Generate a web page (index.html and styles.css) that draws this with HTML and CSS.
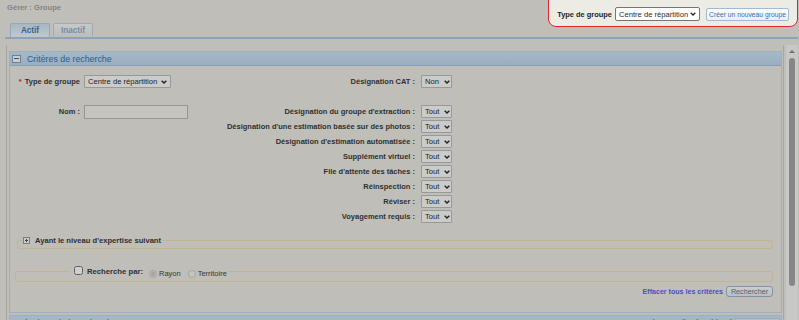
FILE: index.html
```html
<!DOCTYPE html>
<html lang="fr">

<head>
    <meta charset="UTF-8">
    <title>Gérer : Groupe</title>
    <link rel="stylesheet" href="styles.css">
</head>

<body>
    <div class="dim"></div>

    <header class="top">
        <div class="crumb">Gérer : Groupe</div>
        <div class="pick">
            <label>Type de groupe</label>
            <span class="sel sel-top">
                <select><option>Centre de répartition</option></select>
                <svg viewBox="0 0 6 4"><path d="M0.7 0.7 L3 3 L5.3 0.7"/></svg>
            </span>
            <button class="new-btn">Créer un nouveau groupe</button>
        </div>
    </header>

    <nav class="tabs">
        <a class="tab on">Actif</a>
        <a class="tab">Inactif</a>
    </nav>
    <div class="tabline"></div>

    <div class="content">
        <main class="main">
            <section class="panel">
                <h2 class="panel-head"><span class="tog minus"></span>Critères de recherche</h2>
                <div class="panel-body">
                    <div class="crit">
                        <label class="lbl"><span class="req">*</span>Type de groupe</label>
                        <span class="sel w-type">
                            <select><option>Centre de répartition</option></select>
                            <svg viewBox="0 0 6 4"><path d="M0.7 0.7 L3 3 L5.3 0.7"/></svg>
                        </span>
                        <label class="lbl r">Désignation CAT :</label>
                        <span class="sel w-small">
                            <select><option>Non</option></select>
                            <svg viewBox="0 0 6 4"><path d="M0.7 0.7 L3 3 L5.3 0.7"/></svg>
                        </span>

                        <div class="spacer"></div>

                        <label class="lbl">Nom :</label>
                        <input class="txt" type="text">
                        <label class="lbl r">Désignation du groupe d'extraction :</label>
                        <span class="sel w-small"><select><option>Tout</option></select><svg viewBox="0 0 6 4"><path d="M0.7 0.7 L3 3 L5.3 0.7"/></svg></span>

                        <label class="lbl r">Désignation d'une estimation basée sur des photos :</label>
                        <span class="sel w-small"><select><option>Tout</option></select><svg viewBox="0 0 6 4"><path d="M0.7 0.7 L3 3 L5.3 0.7"/></svg></span>

                        <label class="lbl r">Désignation d'estimation automatisée :</label>
                        <span class="sel w-small"><select><option>Tout</option></select><svg viewBox="0 0 6 4"><path d="M0.7 0.7 L3 3 L5.3 0.7"/></svg></span>

                        <label class="lbl r">Supplément virtuel :</label>
                        <span class="sel w-small"><select><option>Tout</option></select><svg viewBox="0 0 6 4"><path d="M0.7 0.7 L3 3 L5.3 0.7"/></svg></span>

                        <label class="lbl r">File d'attente des tâches :</label>
                        <span class="sel w-small"><select><option>Tout</option></select><svg viewBox="0 0 6 4"><path d="M0.7 0.7 L3 3 L5.3 0.7"/></svg></span>

                        <label class="lbl r">Réinspection :</label>
                        <span class="sel w-small"><select><option>Tout</option></select><svg viewBox="0 0 6 4"><path d="M0.7 0.7 L3 3 L5.3 0.7"/></svg></span>

                        <label class="lbl r">Réviser :</label>
                        <span class="sel w-small"><select><option>Tout</option></select><svg viewBox="0 0 6 4"><path d="M0.7 0.7 L3 3 L5.3 0.7"/></svg></span>

                        <label class="lbl r">Voyagement requis :</label>
                        <span class="sel w-small"><select><option>Tout</option></select><svg viewBox="0 0 6 4"><path d="M0.7 0.7 L3 3 L5.3 0.7"/></svg></span>
                    </div>

                    <fieldset class="grp expert">
                        <legend>
                            <span class="leg">
                                <svg class="plus" viewBox="0 0 7 7"><rect x="0.5" y="0.5" width="6" height="6" fill="#fafafa" stroke="#9a9a9a"/><path d="M2 3.5 H5 M3.5 2 V5" stroke="#555"/></svg>
                                Ayant le niveau d'expertise suivant
                            </span>
                        </legend>
                    </fieldset>

                    <fieldset class="grp zone">
                        <legend>
                            <span class="leg">
                                <input class="chk" type="checkbox">
                                <span class="leg-text">Recherche par:</span>
                                <span class="radios">
                                    <input type="radio" name="zone" checked disabled><span>Rayon</span>
                                    <input type="radio" name="zone" disabled><span>Territoire</span>
                                </span>
                            </span>
                        </legend>
                    </fieldset>

                    <div class="actions">
                        <a class="clear">Effacer tous les critères</a>
                        <button class="search">Rechercher</button>
                    </div>
                </div>
            </section>

            <section class="panel results">
                <h2 class="panel-head">
                    <span>Résultats de la recherche</span>
                    <span class="count">Groupes de travail 0 à 0 (de 0)<span class="pager"></span></span>
                </h2>
            </section>
        </main>
        <div class="scroll"><span class="arrow"></span><span class="thumb"></span></div>
    </div>
</body></html>
```
FILE: styles.css
```css
* {
    box-sizing: border-box;
    padding: 0;
    margin: 0;
}

body {
    width: 799px;
    height: 320px;
    overflow: hidden;
    padding: 0 1px 0 5px;
    background: #ecebe4;
    font-family: "Liberation Sans", Arial, sans-serif;
    color: #3b3b3b;
}

/* modal dimming, the group picker sits above it */
.dim {
    position: fixed;
    inset: 0;
    background: rgba(0, 0, 0, 0.19);
    z-index: 5;
    pointer-events: none;
}

.top {
    display: flex;
    justify-content: space-between;
    align-items: flex-start;
    height: 23px;
}

.crumb {
    padding: 3px 0 0 2px;
    font-size: 7.6px;
    line-height: 9px;
    font-weight: bold;
    color: #a3a3a3;
}

.pick {
    position: relative;
    z-index: 6;
    display: flex;
    align-items: center;
    margin-top: -10px;
    padding: 16px 8px 5px 8px;
    background: #ecebe4;
    border: 1.5px solid #e3222b;
    border-radius: 8px;
}

.pick label {
    font-size: 7.45px;
    font-weight: bold;
    color: #1e1e1e;
    margin-right: 3px;
}

.sel {
    display: inline-flex;
    align-items: center;
    height: 13px;
    border: 1px solid #bdbdbd;
    border-radius: 1px;
    background: #fafaf8;
}

.sel select {
    appearance: none;
    -webkit-appearance: none;
    flex: 1;
    min-width: 0;
    height: 100%;
    border: 0;
    background: transparent;
    font-family: "Liberation Sans", Arial, sans-serif;
    font-size: 7.6px;
    color: #2a2a2a;
    padding-left: 3px;
    outline: none;
}

.sel svg {
    flex: none;
    width: 6px;
    height: 4px;
    margin-right: 3px;
    fill: none;
    stroke: #2a2a2a;
    stroke-width: 1.4;
}

.sel-top {
    width: 85px;
    height: 14px;
    border-color: #767676;
    border-radius: 2px;
    background: #fff;
}

.w-type {
    width: 87px;
}

.w-small {
    width: 31px;
}

.w-small svg {
    margin-right: 1.5px;
}

.new-btn {
    margin-left: 6px;
    width: 83px;
    height: 13px;
    padding: 0;
    font-family: "Liberation Sans", Arial, sans-serif;
    font-size: 6.75px;
    color: #3a6ea5;
    background: linear-gradient(#fbfdff, #e8f0f8);
    border: 1px solid #9fbbd6;
    border-radius: 2px;
}

.tabs {
    display: flex;
    align-items: flex-start;
    gap: 3px;
    height: 14px;
    padding-left: 5px;
}

.tab {
    display: flex;
    align-items: center;
    justify-content: center;
    width: 40px;
    height: 13px;
    font-size: 8.2px;
    font-weight: bold;
    color: #94b0c8;
    background: linear-gradient(#f6f7f7, #e7eaeb);
    border: 1px solid #c9d0d5;
    border-bottom: none;
    border-radius: 2px 2px 0 0;
}

.tab.on {
    height: 14px;
    color: #3f7bb0;
    background: linear-gradient(#cfe2f1, #eef5fa);
    border-color: #b6cfe4;
}

.tabline {
    height: 2px;
    background: #abc9e3;
}

.content {
    display: flex;
    height: 275px;
    margin-top: 6px;
}

.main {
    flex: 1;
    margin-left: 1px;
    padding: 6px 1px 0 2px;
    border-left: 1px solid #cfcdc6;
    border-right: 1px solid #cfcdc6;
    overflow: hidden;
}

.scroll {
    width: 12px;
    margin-left: 2px;
    background: #f7f7f5;
    display: flex;
    flex-direction: column;
    align-items: center;
}

.arrow {
    width: 0;
    margin-top: 5px;
    border-left: 3px solid transparent;
    border-right: 3px solid transparent;
    border-bottom: 3px solid #8a8a8a;
}

.thumb {
    width: 6px;
    height: 228px;
    margin-top: 5px;
    border-radius: 3px;
    background: #a5a5a5;
}

.panel {
    border: 1px solid #c4d8ea;
}

.panel-head {
    display: flex;
    align-items: center;
    gap: 6px;
    height: 14px;
    padding-left: 2px;
    background: linear-gradient(#cbe3f6, #bcd7ee);
    border-bottom: 1px solid #a9c6de;
    font-size: 8.8px;
    font-weight: normal;
    color: #3a74aa;
}

.tog {
    display: flex;
    align-items: center;
    justify-content: center;
    width: 9px;
    height: 8px;
    border: 1px solid #8ba2b5;
    background: #fbfcfd;
}

.tog.minus::before {
    content: "";
    width: 5px;
    height: 1px;
    background: #4d6a84;
}

.panel-body {
    padding: 8px 0 15px;
}

.crit {
    display: grid;
    grid-template-columns: 74px 138px 199px auto;
    grid-auto-rows: 15px;
    align-items: center;
}

.lbl {
    justify-self: end;
    padding-right: 4px;
    white-space: nowrap;
    font-size: 7.5px;
    font-weight: bold;
}

.lbl.r {
    grid-column: 3;
    padding-right: 6px;
}

.req {
    color: #d9262c;
    margin-right: 3px;
}

.spacer {
    grid-column: 1 / -1;
}

.txt {
    width: 104px;
    height: 14px;
    border: 1px solid #b9b9b9;
    background: #f3f2ee;
}

.grp {
    border: 1px solid #eadfb3;
    border-radius: 3px;
    min-width: 0;
}

.grp legend {
    padding: 0 1px;
    font-size: 7.6px;
    line-height: 9px;
}

.leg {
    display: flex;
    align-items: center;
    font-size: 7.6px;
    line-height: 9px;
    font-weight: bold;
}

.expert {
    margin: 12px 8px 0 7px;
    padding: 0 0 3px 4px;
}

.plus {
    width: 7px;
    height: 7px;
    margin-right: 5px;
}

.zone {
    margin: 17px 8px 0 5px;
    padding: 0 0 5px 54px;
}

.zone legend {
    padding: 0 1px 0 4px;
}

.zone .leg {
    align-items: flex-start;
}

.chk {
    width: 9px;
    height: 9px;
    margin: 0 4px 0 0;
}

.leg-text {
    margin-top: 1px;
    margin-right: 5px;
    font-size: 7.7px;
}

.radios {
    display: flex;
    align-items: center;
    margin-top: 3px;
    margin-bottom: -3px;
    font-weight: normal;
    font-size: 7.5px;
    color: #444;
}

.radios input {
    width: 8px;
    height: 8px;
    margin: 0 2px 0 1px;
}

.radios span {
    margin-right: 6px;
}

.radios span:last-child {
    margin-right: 0;
}

.actions {
    display: flex;
    justify-content: flex-end;
    align-items: center;
    gap: 3px;
    margin: 4px 8px 0 0;
}

.clear {
    font-size: 7.1px;
    font-weight: bold;
    color: #6060f2;
}

.search {
    width: 47px;
    height: 11px;
    padding: 0;
    font-family: "Liberation Sans", Arial, sans-serif;
    font-size: 7.2px;
    color: #5f7a90;
    background: linear-gradient(#fafcfd, #e4ebf0);
    border: 1px solid #a2b5c5;
    border-radius: 3px;
}

.results {
    margin-top: 2px;
}

.results .panel-head {
    justify-content: space-between;
    padding: 0 1px 0 7px;
}

.count {
    display: flex;
    align-items: center;
    gap: 2px;
}

.pager {
    width: 45px;
    height: 9px;
    background: #e4e7ea;
    border: 1px solid #c9d3dc;
}
```
